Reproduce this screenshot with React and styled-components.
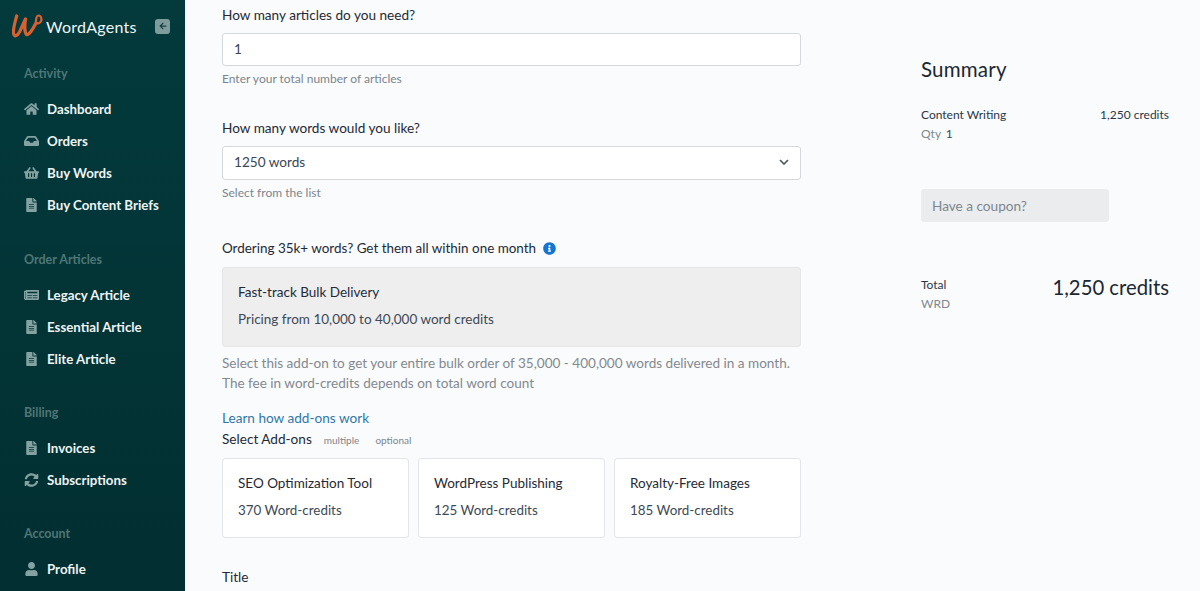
import React from "react";
import styled, { createGlobalStyle } from "styled-components";
import {
  FaHome,
  FaInbox,
  FaShoppingBasket,
  FaFileAlt,
  FaNewspaper,
  FaSyncAlt,
  FaUser,
  FaInfoCircle,
  FaArrowLeft,
} from "react-icons/fa";

const GlobalStyle = createGlobalStyle`
  html, body {
    margin: 0;
    padding: 0;
    height: 591px;
    overflow: hidden;
    background: #fafbfd;
    font-family: "Lato", "Liberation Sans", sans-serif;
    color: #1b2733;
  }
`;

const Page = styled.div`
  display: flex;
  width: 1200px;
  height: 591px;
  overflow: hidden;
`;

const Sidebar = styled.aside`
  flex: 0 0 185px;
  height: 591px;
  overflow: hidden;
  background: linear-gradient(180deg, #033a3c 0%, #022f31 100%);
`;

const Brand = styled.div`
  display: flex;
  align-items: center;
  height: 26px;
  padding: 13px 15px 0 12px;
`;

const BrandName = styled.span`
  margin-left: 2px;
  flex: 1;
  color: #f2f6f6;
  font-size: 16px;
  letter-spacing: 0.25px;
`;

const BackButton = styled.span`
  display: flex;
  align-items: center;
  justify-content: center;
  width: 15px;
  height: 15px;
  border-radius: 3px;
  background: #7f9c9c;
  color: #163f41;
  font-size: 8px;
`;

const NavGroup = styled.div`
  padding-top: ${(p) => p.$top}px;
`;

const NavHeading = styled.div`
  padding-left: 24px;
  height: 16px;
  line-height: 16px;
  margin-bottom: 11px;
  color: #4f7676;
  font-size: 12.5px;
  font-weight: 700;
`;

const NavItem = styled.div`
  display: flex;
  align-items: center;
  height: 32px;
  padding-left: 24px;
  color: #eef3f3;
  font-size: 13.3px;
  font-weight: 700;

  svg {
    flex: 0 0 15px;
    width: 15px;
    margin-right: 8px;
    color: #84a2a2;
    font-size: 14px;
  }
`;

const Main = styled.main`
  flex: 0 0 579px;
  margin-left: 37px;
  padding-top: 7px;
`;

const FieldLabel = styled.div`
  height: 16px;
  line-height: 16px;
  font-size: 13.6px;
  color: #1f2a36;
  margin-top: ${(p) => p.$top || 0}px;
`;

const BulkLabel = styled(FieldLabel)`
  font-size: 13.45px;
`;

const InputBox = styled.div`
  display: flex;
  align-items: center;
  justify-content: space-between;
  box-sizing: border-box;
  height: ${(p) => p.$height}px;
  margin-top: 10px;
  padding: 0 11px 2px;
  background: #fff;
  border: 1px solid #d5d9de;
  border-radius: 3px;
  font-size: 13.6px;
  color: #3a4652;
`;

const Help = styled.div`
  height: 16px;
  line-height: 16px;
  margin-top: 5px;
  font-size: 12px;
  color: #7c858d;
`;

const InfoIcon = styled(FaInfoCircle)`
  margin-left: 7px;
  font-size: 13px;
  color: #1575d1;
  vertical-align: -2px;
`;

const BulkBox = styled.div`
  box-sizing: border-box;
  height: 80px;
  margin-top: 11px;
  padding: 16px 15px;
  background: #eeeeef;
  border: 1px solid #e6e6e8;
  border-radius: 3px;
`;

const OptionTitle = styled.div`
  height: 16px;
  line-height: 16px;
  font-size: 13.5px;
  color: #1f2a36;
`;

const OptionPrice = styled.div`
  height: 16px;
  line-height: 16px;
  margin-top: 11px;
  font-size: ${(p) => p.$size || 13.4}px;
  color: #3d4955;
`;

const Description = styled.p`
  margin: 6px 0 0;
  font-size: 13.55px;
  line-height: 20px;
  color: #83898f;
  white-space: nowrap;
`;

const LearnLink = styled.a`
  display: block;
  height: 16px;
  line-height: 16px;
  margin-top: 17px;
  font-size: 13.6px;
  color: #2f78a8;
`;

const AddonsHead = styled.div`
  display: flex;
  align-items: baseline;
  height: 16px;
  line-height: 16px;
  margin-top: 5px;
  font-size: 13.6px;
  color: #1f2a36;
`;

const Tag = styled.span`
  margin-left: ${(p) => p.$left}px;
  font-size: 10px;
  color: #7c858d;
`;

const CardRow = styled.div`
  display: grid;
  grid-template-columns: repeat(3, 187px);
  column-gap: 9px;
  margin-top: 11px;
`;

const Card = styled.div`
  box-sizing: border-box;
  height: 80px;
  padding: 16px 15px;
  background: #fff;
  border: 1px solid #e2e5e9;
  border-radius: 3px;
`;

const Summary = styled.section`
  flex: 0 0 248px;
  margin-left: 120px;
  padding-top: 58px;
`;

const SummaryTitle = styled.h2`
  margin: 0;
  height: 22px;
  line-height: 22px;
  font-size: 20.5px;
  font-weight: 400;
  letter-spacing: 0.2px;
  color: #1b2733;
`;

const Line = styled.div`
  display: flex;
  justify-content: space-between;
  align-items: flex-start;
  margin-top: ${(p) => p.$top}px;
  font-size: 12px;
  line-height: 16px;
  color: #2b3744;
`;

const TotalLabel = styled.span`
  padding-top: 2px;
`;

const Muted = styled.div`
  margin-top: ${(p) => p.$top || 3}px;
  font-size: 12px;
  line-height: 15px;
  color: #80888f;

  b {
    margin-left: 2px;
    font-weight: 400;
    color: #3d4955;
  }
`;

const Coupon = styled.div`
  display: flex;
  align-items: center;
  box-sizing: border-box;
  width: 188px;
  height: 33px;
  margin-top: 48px;
  padding-left: 11px;
  background: #ebecee;
  border-radius: 3px;
  font-size: 13.6px;
  color: #7c8790;
`;

const TotalAmount = styled.span`
  font-size: 20.3px;
  line-height: 24px;
  color: #1b2733;
`;

const nav = [
  { title: "Activity", top: 27, items: [[FaHome, "Dashboard"], [FaInbox, "Orders"], [FaShoppingBasket, "Buy Words"], [FaFileAlt, "Buy Content Briefs"]] },
  { title: "Order Articles", top: 31, items: [[FaNewspaper, "Legacy Article"], [FaFileAlt, "Essential Article"], [FaFileAlt, "Elite Article"]] },
  { title: "Billing", top: 30, items: [[FaFileAlt, "Invoices"], [FaSyncAlt, "Subscriptions"]] },
  { title: "Account", top: 30, items: [[FaUser, "Profile"]] },
];

const addons = [
  ["SEO Optimization Tool", "370 Word-credits"],
  ["WordPress Publishing", "125 Word-credits"],
  ["Royalty-Free Images", "185 Word-credits"],
];

function LogoMark() {
  return (
    <svg width="32" height="26" viewBox="0 0 32 26" fill="none" stroke="#d9602f" strokeWidth="3.2" strokeLinecap="round" strokeLinejoin="round">
      <path d="M4.7 3C3 9 .8 16 1.500 20.500C2.500 24 5 23.500 7.500 19L13.500 6C12.500 12 12.500 19.500 14.500 21.500C16.500 23 21 16 24 10" />
      <path d="M24 10C23.800 6 24.500 2.500 26.500 2.500C29.500 2.500 30.500 7.500 28 9.500C26.800 10.500 25 10.500 24 10" strokeWidth="2.200" />
    </svg>
  );
}

export default function App() {
  return (
    <Page>
      <GlobalStyle />
      <Sidebar>
        <Brand>
          <LogoMark />
          <BrandName>WordAgents</BrandName>
          <BackButton>
            <FaArrowLeft />
          </BackButton>
        </Brand>
        {nav.map((group) => (
          <NavGroup key={group.title} $top={group.top}>
            <NavHeading>{group.title}</NavHeading>
            {group.items.map(([Icon, label]) => (
              <NavItem key={label}>
                <Icon />
                {label}
              </NavItem>
            ))}
          </NavGroup>
        ))}
      </Sidebar>

      <Main>
        <FieldLabel>How many articles do you need?</FieldLabel>
        <InputBox $height={33}>1</InputBox>
        <Help>Enter your total number of articles</Help>

        <FieldLabel $top={33}>How many words would you like?</FieldLabel>
        <InputBox $height={34}>
          1250 words
          <svg width="10" height="6" viewBox="0 0 10 6" fill="none" stroke="#4a5560" strokeWidth="1.6">
            <path d="M1 1l4 4 4-4" />
          </svg>
        </InputBox>
        <Help>Select from the list</Help>

        <BulkLabel $top={39}>
          Ordering 35k+ words? Get them all within one month
          <InfoIcon />
        </BulkLabel>
        <BulkBox>
          <OptionTitle>Fast-track Bulk Delivery</OptionTitle>
          <OptionPrice $size={13.5}>Pricing from 10,000 to 40,000 word credits</OptionPrice>
        </BulkBox>
        <Description>
          Select this add-on to get your entire bulk order of 35,000 - 400,000 words delivered in a month.
          <br />
          The fee in word-credits depends on total word count
        </Description>
        <LearnLink>Learn how add-ons work</LearnLink>
        <AddonsHead>
          Select Add-ons
          <Tag $left={12}>multiple</Tag>
          <Tag $left={16}>optional</Tag>
        </AddonsHead>
        <CardRow>
          {addons.map(([name, price]) => (
            <Card key={name}>
              <OptionTitle>{name}</OptionTitle>
              <OptionPrice>{price}</OptionPrice>
            </Card>
          ))}
        </CardRow>
        <FieldLabel $top={31}>Title</FieldLabel>
      </Main>

      <Summary>
        <SummaryTitle>Summary</SummaryTitle>
        <Line $top={27}>
          <span>Content Writing</span>
          <span>1,250 credits</span>
        </Line>
        <Muted>
          Qty <b>1</b>
        </Muted>
        <Coupon>Have a coupon?</Coupon>
        <Line $top={53}>
          <TotalLabel>Total</TotalLabel>
          <TotalAmount>1,250 credits</TotalAmount>
        </Line>
        <Muted $top={-3}>WRD</Muted>
      </Summary>
    </Page>
  );
}
